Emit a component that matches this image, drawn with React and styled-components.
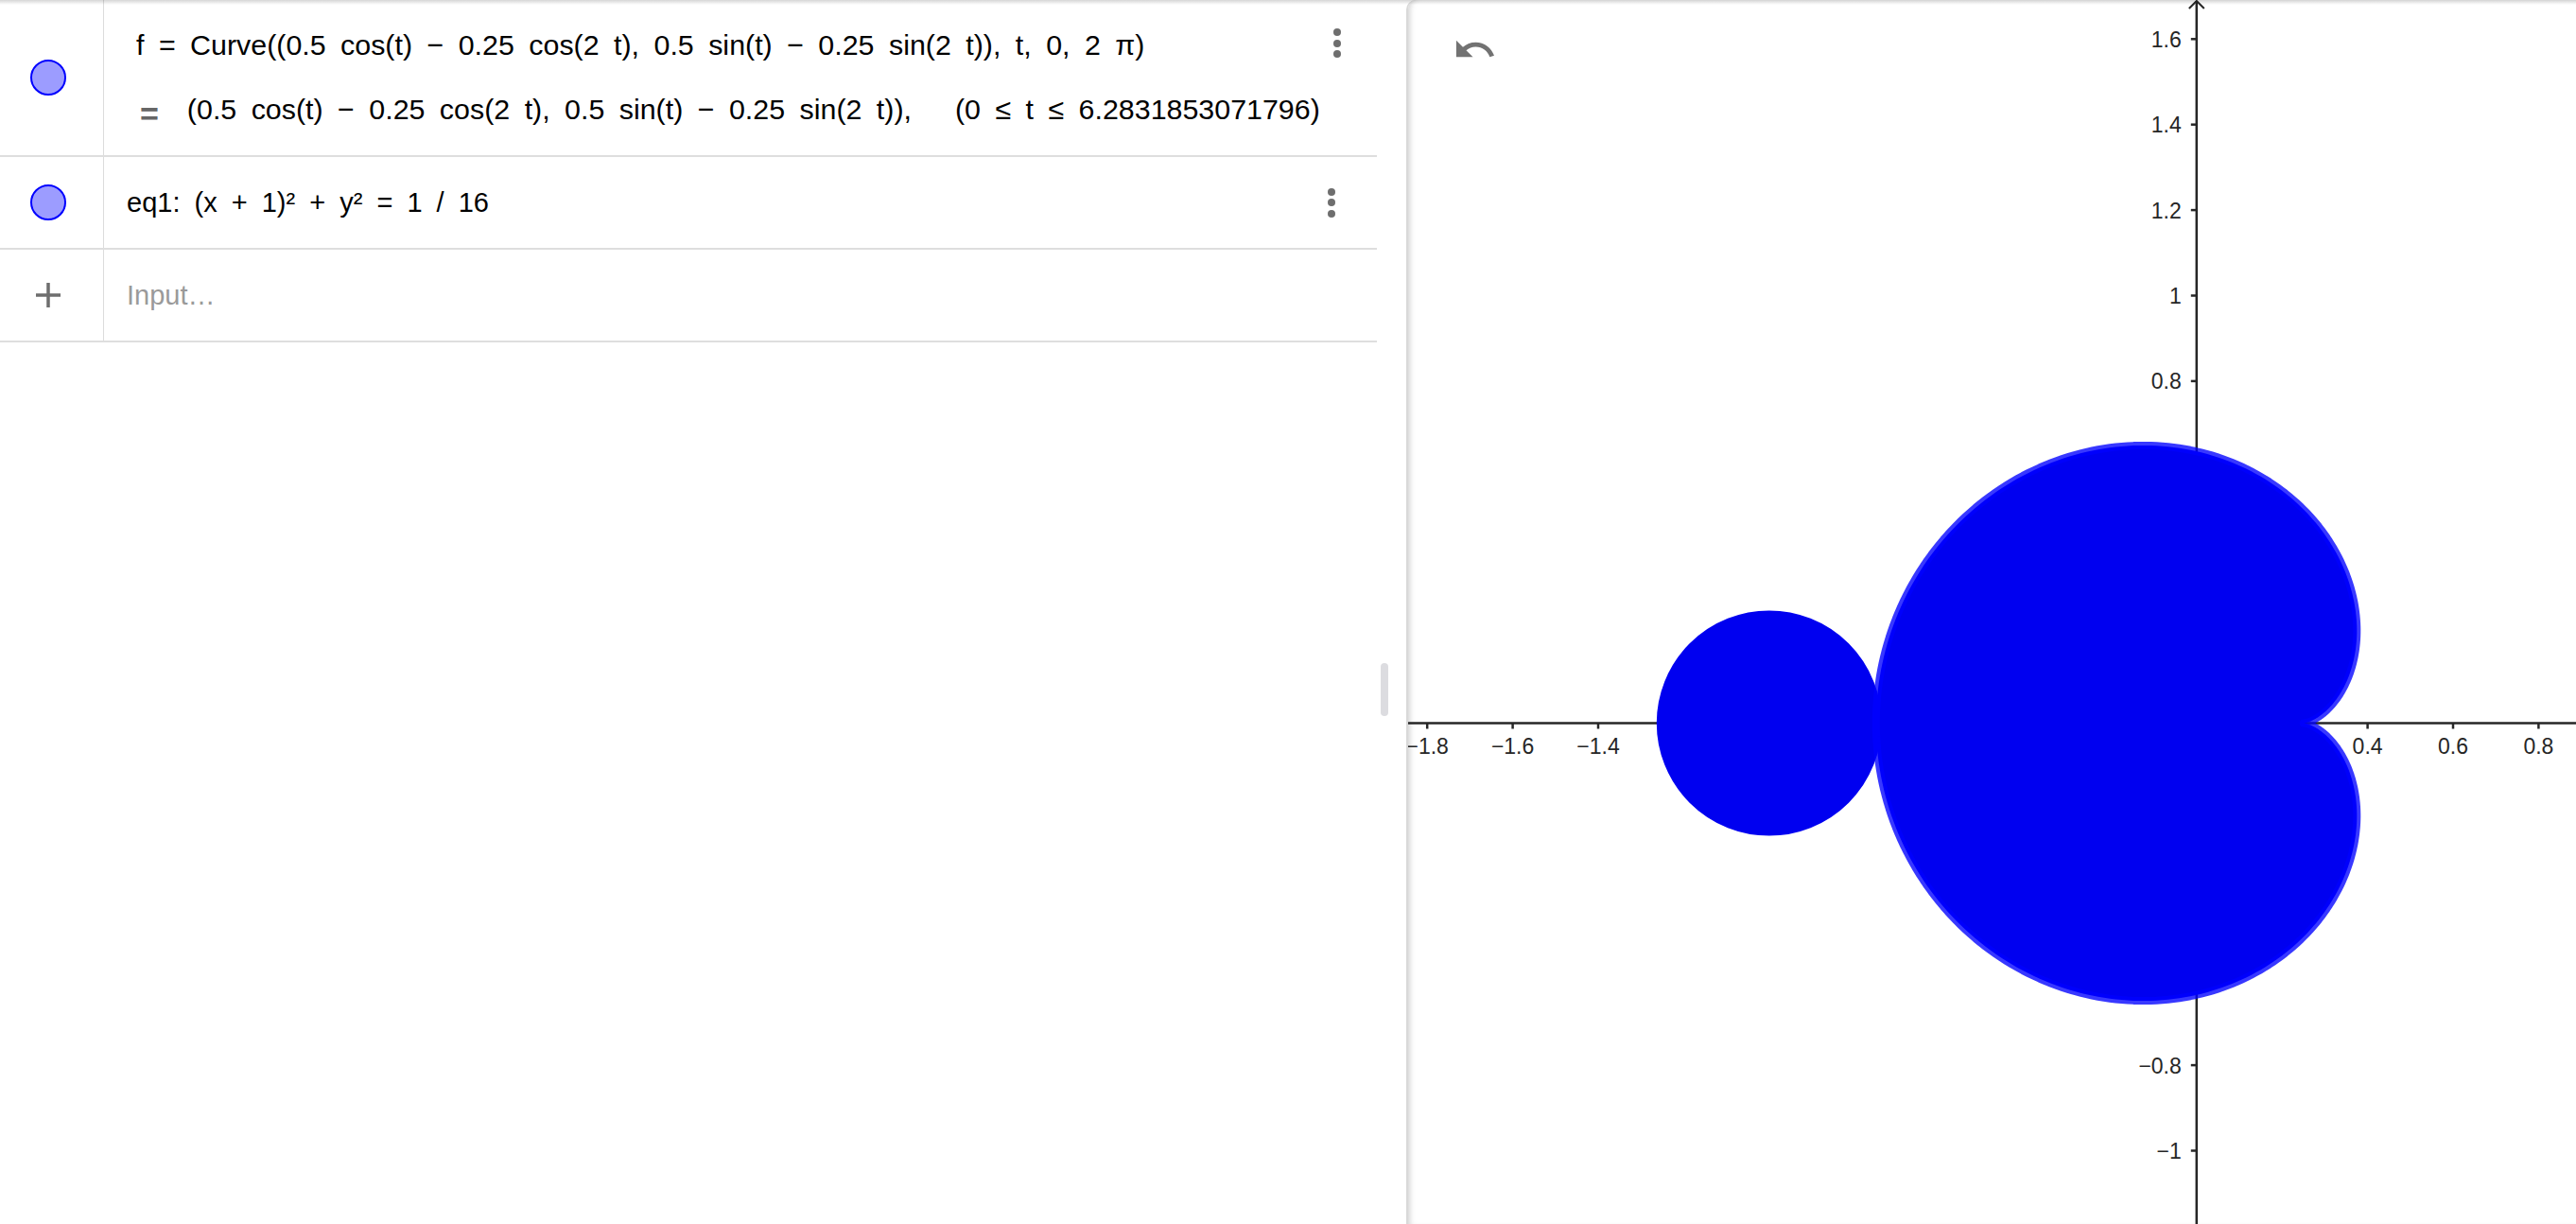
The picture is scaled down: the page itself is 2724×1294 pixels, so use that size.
import React from "react";
import styled, { createGlobalStyle } from "styled-components";

const GlobalStyle = createGlobalStyle`
  html, body {
    margin: 0;
    padding: 0;
    background: #fff;
  }
  body {
    font-family: "Liberation Sans", Arial, sans-serif;
  }
`;

const Page = styled.div`
  position: relative;
  display: flex;
  width: 2724px;
  height: 1294px;
  overflow: hidden;
  background: #fff;

  &::after {
    content: "";
    position: absolute;
    left: 0;
    right: 0;
    top: 0;
    height: 5px;
    background: linear-gradient(rgba(0, 0, 0, 0.16), rgba(0, 0, 0, 0));
    pointer-events: none;
  }
`;

/* ---------- algebra view ---------- */

const AlgebraPanel = styled.div`
  width: 1487px;
  flex-shrink: 0;
  display: flex;
  background: #fff;
`;

const List = styled.div`
  width: 1456px;
  display: flex;
  flex-direction: column;
`;

const Splitter = styled.div`
  flex: 1;
  padding: 701px 0 0 4px;
`;

const Pill = styled.div`
  width: 8px;
  height: 56px;
  border-radius: 4px;
  background: #dcdce0;
`;

const Row = styled.div`
  display: flex;
  height: ${(p) => p.$h}px;
  border-bottom: 2px solid #dedede;
`;

const MarbleCell = styled.div`
  width: 110px;
  flex-shrink: 0;
  box-sizing: border-box;
  border-right: 1px solid #dcdcdc;
  display: flex;
  align-items: center;
  justify-content: center;
  padding-right: 8px;
`;

const Marble = styled.div`
  width: 38px;
  height: 38px;
  box-sizing: border-box;
  border-radius: 50%;
  border: 2px solid #0000ff;
  background: #9c9cff;
`;

const Content = styled.div`
  flex: 1;
  display: flex;
  flex-direction: column;
  justify-content: ${(p) => (p.$top ? "flex-start" : "center")};
  padding: ${(p) => (p.$top ? "27px 0 0 24px" : "0 0 0 24px")};
  gap: 27px;
`;

const Line = styled.div`
  display: flex;
  align-items: baseline;
  height: 40px;
  line-height: 40px;
  padding-left: ${(p) => p.$indent || 0}px;
`;

const Formula = styled.span`
  font-size: ${(p) => p.$size || 29}px;
  color: #000;
  white-space: pre;
  word-spacing: 7px;
  margin-left: ${(p) => p.$gap || 0}px;
`;

const EqSign = styled.span`
  font-size: 34px;
  font-weight: bold;
  color: #666;
  margin-right: 30px;
  position: relative;
  top: 6px;
`;

const Placeholder = styled.span`
  font-size: 29px;
  color: #9a9a9a;
`;

const Menu = styled.div`
  width: 48px;
  margin-right: 24px;
  display: flex;
  flex-direction: column;
  align-items: center;
  justify-content: ${(p) => (p.$top ? "flex-start" : "center")};
  padding-top: ${(p) => (p.$top ? 30 : 0)}px;
  gap: 3.5px;
`;

const Dot = styled.span`
  width: 8px;
  height: 8px;
  border-radius: 50%;
  background: #6e6e6e;
`;

const Dots = ({ top }) => (
  <Menu $top={top}>
    <Dot />
    <Dot />
    <Dot />
  </Menu>
);

/* ---------- graphics view ---------- */

const GraphPanel = styled.div`
  position: relative;
  flex: 1;
  border-left: 2px solid #d9d9d9;
  border-top-left-radius: 10px;
  box-shadow: inset 6px 0 7px -5px rgba(0, 0, 0, 0.22);
  overflow: hidden;
`;

const Canvas = styled.svg`
  display: block;
`;

const UndoButton = styled.button`
  position: absolute;
  left: 47px;
  top: 29px;
  width: 47px;
  height: 47px;
  padding: 0;
  border: none;
  background: none;
  color: #727272;
`;

const W = 1235;
const H = 1294;
const OX = 833.8;
const OY = 764.5;
const S = 452;

const cardioid = (() => {
  const pts = [];
  for (let i = 0; i <= 400; i++) {
    const t = (i / 400) * Math.PI * 2;
    const x = 0.5 * Math.cos(t) - 0.25 * Math.cos(2 * t);
    const y = 0.5 * Math.sin(t) - 0.25 * Math.sin(2 * t);
    pts.push(`${(OX + x * S).toFixed(2)},${(OY - y * S).toFixed(2)}`);
  }
  return "M" + pts.join("L") + "Z";
})();

const label = (k) => {
  const v = Math.round(Math.abs(k) * 2) / 10;
  return (k < 0 ? "\u2212" : "") + v;
};

const xTicks = [];
for (let k = -9; k <= 4; k++) if (k !== 0) xTicks.push(k);
const yTicks = [];
for (let k = -5; k <= 8; k++) if (k !== 0) yTicks.push(k);

const axisColor = "#262626";

const Graph = () => (
  <Canvas width={W} height={H} viewBox={`0 0 ${W} ${H}`}>
    <g stroke={axisColor} strokeWidth="2.5" fill="none">
      <line x1="0" y1={OY} x2={W} y2={OY} />
      <line x1={OX} y1="1" x2={OX} y2={H} />
      <polyline points={`${OX - 8},${9} ${OX},${1} ${OX + 8},${9}`} strokeWidth="2" />
      {xTicks.map((k) => (
        <line key={"xt" + k} x1={OX + k * 0.2 * S} y1={OY} x2={OX + k * 0.2 * S} y2={OY + 6} />
      ))}
      {yTicks.map((k) => (
        <line key={"yt" + k} x1={OX - 6} y1={OY - k * 0.2 * S} x2={OX} y2={OY - k * 0.2 * S} />
      ))}
    </g>
    <g fill={axisColor} fontFamily='"Liberation Sans", Arial, sans-serif' fontSize="23">
      {xTicks.map((k) => (
        <text key={"xl" + k} x={OX + k * 0.2 * S} y={OY + 32.5} textAnchor="middle">
          {label(k)}
        </text>
      ))}
      {yTicks.map((k) => (
        <text key={"yl" + k} x={OX - 16} y={OY - k * 0.2 * S + 8.5} textAnchor="end">
          {label(k)}
        </text>
      ))}
    </g>
    <circle cx={OX - S} cy={OY} r="116" fill="#0000f0" stroke="#0000f0" strokeWidth="6" />
    <path d={cardioid} fill="#0000f0" stroke="rgba(0,0,255,0.78)" strokeWidth="8" strokeLinejoin="round" />
  </Canvas>
);

const UndoIcon = () => (
  <svg width="47" height="47" viewBox="0 0 24 24" fill="currentColor">
    <path d="M12.5 8c-2.65 0-5.05.99-6.9 2.6L2 7v9h9l-3.62-3.62c1.39-1.16 3.16-1.88 5.12-1.88 3.54 0 6.55 2.31 7.6 5.5l2.37-.78C21.08 11.03 17.15 8 12.5 8z" />
  </svg>
);

const PlusIcon = () => (
  <svg width="30" height="30" viewBox="0 0 30 30">
    <path d="M15 2v26M2 15h26" stroke="#6e6e6e" strokeWidth="3.5" />
  </svg>
);

const App = () => (
  <>
    <GlobalStyle />
    <Page>
      <AlgebraPanel>
        <List>
          <Row $h={164}>
            <MarbleCell>
              <Marble />
            </MarbleCell>
            <Content $top>
              <Line $indent={10}>
                <Formula $size={30.4}>
                  f = Curve((0.5 cos(t) − 0.25 cos(2 t), 0.5 sin(t) − 0.25 sin(2 t)), t, 0, 2 π)
                </Formula>
              </Line>
              <Line $indent={14}>
                <EqSign>=</EqSign>
                <Formula $size={30.4}>(0.5 cos(t) − 0.25 cos(2 t), 0.5 sin(t) − 0.25 sin(2 t)),</Formula>
                <Formula $size={30.4} $gap={46}>(0 ≤ t ≤ 6.2831853071796)</Formula>
              </Line>
            </Content>
            <Dots top />
          </Row>
          <Row $h={96}>
            <MarbleCell>
              <Marble />
            </MarbleCell>
            <Content>
              <Line>
                <Formula>eq1: (x + 1)² + y² = 1 / 16</Formula>
              </Line>
            </Content>
            <Dots />
          </Row>
          <Row $h={96}>
            <MarbleCell>
              <PlusIcon />
            </MarbleCell>
            <Content>
              <Line>
                <Placeholder>Input…</Placeholder>
              </Line>
            </Content>
          </Row>
        </List>
        <Splitter>
          <Pill />
        </Splitter>
      </AlgebraPanel>
      <GraphPanel>
        <Graph />
        <UndoButton aria-label="Undo">
          <UndoIcon />
        </UndoButton>
      </GraphPanel>
    </Page>
  </>
);

export default App;
